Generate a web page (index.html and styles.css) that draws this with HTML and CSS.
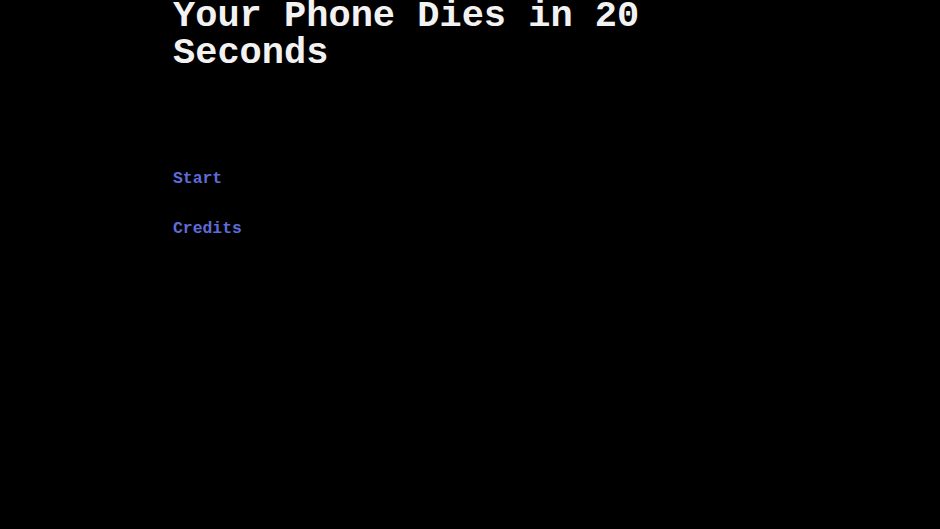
FILE: index.html
```html
<!DOCTYPE html>
<html>
<head>
<meta charset="utf-8">
<link rel="stylesheet" href="styles.css">
</head>
<body>
<main class="menu">
  <h1 class="title">Your Phone Dies in 20 Seconds</h1>
  <nav class="links">
    <a class="link" href="#">Start</a>
    <a class="link" href="#">Credits</a>
  </nav>
</main>
</body>
</html>
```

FILE: styles.css
```css
html, body {
  margin: 0;
  padding: 0;
  background: #000;
  height: 100%;
  overflow: hidden;
}
.menu {
  padding-left: 173px;
  font-family: "Liberation Mono", "Courier New", monospace;
  font-weight: bold;
}
.title {
  margin: -2px 0 0 0;
  width: 480px;
  font-size: 37px;
  line-height: 37px;
  color: #f2f2f2;
  font-weight: bold;
}
.links {
  display: flex;
  flex-direction: column;
  align-items: flex-start;
  gap: 32px;
  margin-top: 98px;
}
.link {
  font-size: 16.4px;
  line-height: 18px;
  color: #5f6cd8;
  text-decoration: none;
}
```
